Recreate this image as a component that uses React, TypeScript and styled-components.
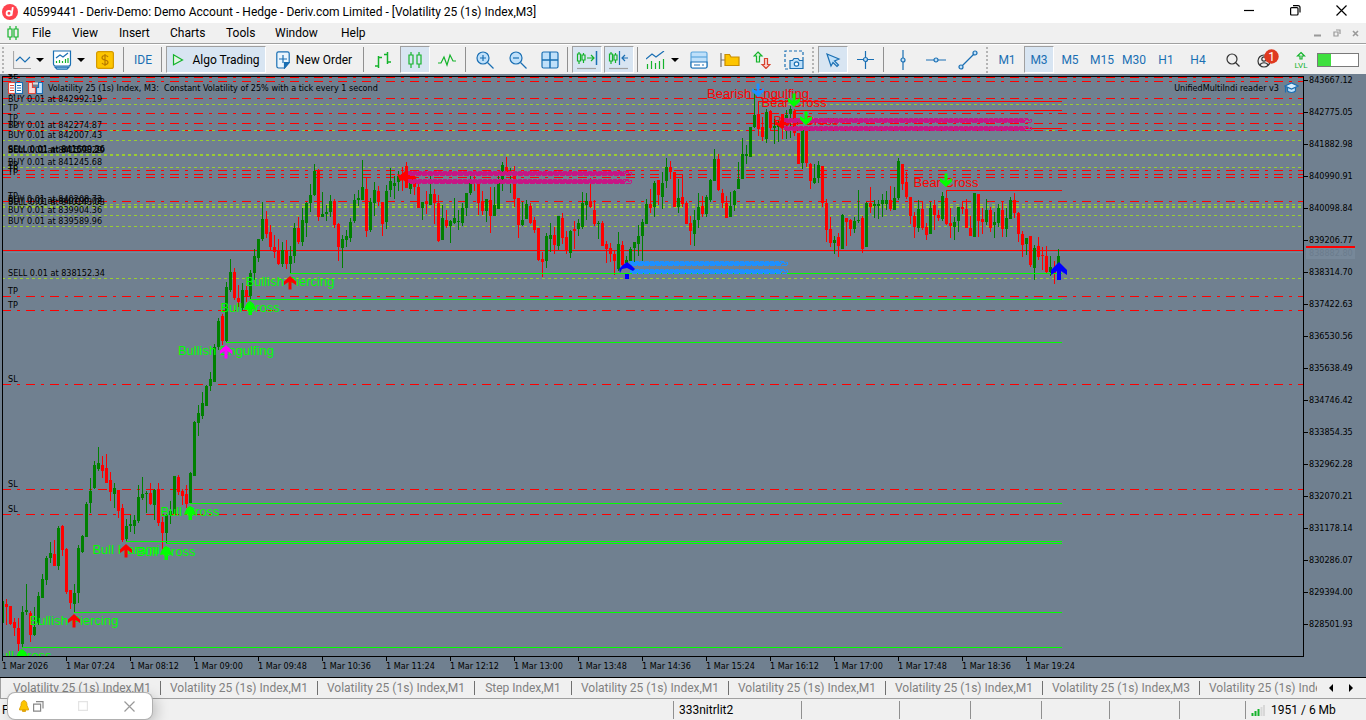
import React from "react";
import styled, { createGlobalStyle, css } from "styled-components";

/* ------------------------------------------------------------------ */
/* Theme values                                                        */
/* ------------------------------------------------------------------ */

const uiFont = `Roboto, "Open Sans", sans-serif`;
const chartFont = `"DejaVu Sans Condensed", "DejaVu Sans", sans-serif`;
const slate = "#708090";
const chrome = "#f0f0f0";
const blue = "#1a6fb3";
const sky = "#bfe0fa";
const green = "#14b32b";

const GlobalStyle = createGlobalStyle`
  * { box-sizing: border-box; }
  html, body { margin: 0; padding: 0; height: 100%; }
  body { overflow: hidden; background: ${chrome}; }
  button, input { font: inherit; }
`;

/* ------------------------------------------------------------------ */
/* Layout                                                              */
/* ------------------------------------------------------------------ */

const Page = styled.div`
  position: relative;
  display: flex;
  flex-direction: column;
  height: 100vh;
  overflow: hidden;
  font-family: ${uiFont};
  font-size: 12px;
  color: #000;
  background: ${chrome};
`;

const TitleBar = styled.header`
  display: flex;
  align-items: center;
  gap: 5px;
  height: 23px;
  flex: none;
  padding-left: 2px;
  background: #fff;
`;

const Title = styled.h1`
  flex: 1;
  margin: 0;
  font-size: 12px;
  font-weight: 400;
  line-height: 20px;
  white-space: nowrap;
`;

const bareButton = css`
  appearance: none;
  border: 0;
  padding: 0;
  margin: 0;
  background: transparent;
  color: inherit;
  display: flex;
  align-items: center;
  justify-content: center;
  flex: none;
  white-space: nowrap;
`;

const WindowButton = styled.button`
  ${bareButton}
  width: 46px;
  height: 20px;
  align-self: flex-start;
`;

const WindowButtons = styled.div`
  display: flex;
  height: 23px;
  margin-right: 2px;
`;

const MenuBar = styled.nav`
  display: flex;
  align-items: center;
  height: 21px;
  flex: none;
  padding-left: 7px;
  border-bottom: 1px solid #a0a0a0;
`;

const MenuItem = styled.button<{ $w: number }>`
  ${bareButton}
  justify-content: flex-start;
  width: ${(p) => p.$w}px;
  height: 20px;
`;

const ChildButtons = styled.div`
  display: flex;
  margin-left: auto;
  margin-right: 1px;
`;

const ChildButton = styled.button`
  ${bareButton}
  width: 19px;
  height: 20px;
`;

const Toolbar = styled.div`
  display: flex;
  align-items: center;
  height: 30px;
  flex: none;
  border-top: 1px solid #fff;
`;

const Grip = styled.span`
  flex: none;
  width: 2px;
  height: 26px;
  margin: 0 4px 0 2px;
  background: repeating-linear-gradient(#b4b4b4 0 2px, transparent 2px 4px);
`;

const Separator = styled.span<{ $before?: number }>`
  flex: none;
  width: 1px;
  height: 25px;
  margin: 0 2px 0 ${(p) => 1 + (p.$before ?? 0)}px;
  background: #909090;
`;

const Tool = styled.button<{ $w?: number; $on?: boolean; $before?: number; $ink?: string; $gap?: number }>`
  ${bareButton}
  width: ${(p) => p.$w ?? 32}px;
  height: 27px;
  gap: ${(p) => p.$gap ?? 5}px;
  margin-left: ${(p) => p.$before ?? 0}px;
  color: ${(p) => p.$ink ?? "#000"};
  ${(p) =>
    p.$on &&
    css`
      background: #d8e5f2;
      border: 1px solid;
      border-color: #a0a0a0 #fff #fff #a0a0a0;
    `}
`;

const Caret = styled.span`
  border: 4px solid transparent;
  border-top-color: #000;
  border-bottom: 0;
`;

const Meter = styled.div`
  flex: none;
  width: 42px;
  height: 14px;
  border: 1px solid #7a7a7a;
  background: linear-gradient(90deg, #3fe03f 0 13px, #fff 13px);
`;

const ChartArea = styled.main`
  flex: 1;
  min-height: 0;
  display: grid;
  grid-template-columns: minmax(0, 1fr) 62px;
  grid-template-rows: minmax(0, 1fr) 20px;
  padding: 2px 0 0 2px;
  background: ${slate};
  border-bottom: 1px solid #000;
  font-family: ${chartFont};
  font-size: 9px;
`;

const Plot = styled.section`
  position: relative;
  border: 1px solid #000;
  min-height: 0;
`;

const PlotSvg = styled.svg`
  display: block;
  width: 100%;
  height: 100%;
  overflow: visible;
  clip-path: inset(-3px 0 0 0);
`;

const PlotHead = styled.div`
  position: absolute;
  top: 3px;
  left: 5px;
  right: 4px;
  height: 16px;
  display: flex;
  align-items: center;
  gap: 5px;
  white-space: pre;
`;

const Expert = styled.span`
  margin-left: auto;
`;

const PriceAxis = styled.aside`
  overflow: hidden;
  position: relative;
`;

const PriceList = styled.ol`
  list-style: none;
  margin: -12px 0 0;
  padding: 0;
`;

const PriceItem = styled.li`
  display: flex;
  align-items: center;
  gap: 1px;
  height: 32px;
  &::before {
    content: "";
    width: 4px;
    height: 1px;
    background: #000;
  }
`;

const BidTag = styled.div`
  position: absolute;
  top: 170px;
  left: 2px;
  width: 49px;
  height: 13px;
  padding-left: 3px;
  border-top: 2px solid #f00;
  background: #778899;
  color: #6b7c8d;
  line-height: 11px;
`;

const TimeAxis = styled.ol`
  display: flex;
  list-style: none;
  margin: 0;
  padding: 0;
  overflow: hidden;
  grid-column: 1 / -1;
`;

const TimeItem = styled.li`
  position: relative;
  flex: 0 0 64px;
  line-height: 18px;
  white-space: nowrap;
  &::before {
    content: "";
    position: absolute;
    left: 0;
    top: 0;
    width: 1px;
    height: 4px;
    background: #000;
  }
`;

const TabBar = styled.nav`
  display: flex;
  height: 21px;
  flex: none;
  border-bottom: 1px solid #a0a0a0;
  border-left: 1px solid #a0a0a0;
  color: #808080;
`;

const TabStrip = styled.div`
  display: flex;
  align-items: center;
  flex: 1;
  min-width: 0;
  overflow: hidden;
  padding-left: 3px;
`;

const Tab = styled.button<{ $w: number }>`
  ${bareButton}
  width: ${(p) => p.$w}px;
  height: 14px;
  border-right: 1px solid #707070;
`;

const TabArrow = styled.button`
  ${bareButton}
  width: 20px;
  height: 19px;
`;

const TabArrows = styled.div`
  display: flex;
  flex: none;
  padding: 0 5px 0 4px;
`;

const StatusBar = styled.footer`
  display: flex;
  align-items: center;
  height: 21px;
  flex: none;
`;

const StatusCell = styled.div<{ $w?: number }>`
  display: flex;
  align-items: center;
  gap: 6px;
  height: 18px;
  ${(p) => (p.$w ? `flex: 0 0 ${p.$w}px;` : "flex: 1; min-width: 0;")}
  padding-left: 5px;
  border-left: 1px solid #909090;
  white-space: nowrap;
  &:first-child {
    border-left: 0;
    padding-left: 2px;
  }
`;

const Popup = styled.div`
  position: absolute;
  left: 8px;
  bottom: 1px;
  width: 144px;
  height: 26px;
  display: flex;
  align-items: center;
  border-radius: 7px;
  background: #fff;
  box-shadow: 0 0 0 1px #b0b0b0, 4px 4px 14px rgba(0, 0, 0, 0.22);
`;

const PopupButton = styled.button<{ $before: number }>`
  ${bareButton}
  margin-left: ${(p) => p.$before}px;
  width: 12px;
  height: 14px;
`;

/* ------------------------------------------------------------------ */
/* Toolbar icons                                                       */
/* ------------------------------------------------------------------ */

type IconProps = { w?: number; h?: number; children: React.ReactNode };
const Icon = ({ w = 20, h = 20, children }: IconProps) => (
  <svg width={w} height={h} viewBox={`0 0 ${w} ${h}`} fill="none" strokeWidth="1.2" aria-hidden="true">
    {children}
  </svg>
);

const Logo = () => (
  <Icon w={16} h={16}>
    <circle cx="8" cy="8" r="8" fill="#ff444f" />
    <circle cx="7" cy="9.3" r="2.4" stroke="#fff" strokeWidth="1.8" />
    <path d="M10.8 3.2 9.4 11.6" stroke="#fff" strokeWidth="1.8" />
  </Icon>
);

const CandlePair = ({ w = 12, h = 14 }) => (
  <Icon w={w} h={h}>
    <path d="M3 0v3M3 11v3M9 0v3M9 11v3M1 3h4v8H1zM7 3h4v8H7z" stroke={green} />
  </Icon>
);

const CandlesIcon = () => (
  <Icon w={14} h={18}>
    <path d="M3 1v3M3 13v4M11 1v3M11 13v4M1 4h4v9H1zM9 4h4v9H9z" stroke={green} />
  </Icon>
);

const LineChartIcon = () => (
  <Icon w={18} h={18}>
    <path d="M.5 0v17.5H18" stroke="#a8a8a8" />
    <path d="M3 10l4-4 5 5 5-5" stroke={blue} />
  </Icon>
);

const IndicatorWindowIcon = () => (
  <Icon w={20} h={20}>
    <path d="M1.5 1h17v13c0 1-1 2-2 2h-13c-1 0-2-1-2-2z" fill="#fff" stroke={blue} />
    <path d="M3 17.2h14l-2 2H5z" fill={sky} stroke={blue} />
    <path d="M4 8l4-3 3 2 5-4" stroke={blue} />
    <path d="M4.5 11v2M7.5 10v3M10.5 11v2M13.5 9v4M16 8v5" stroke={green} />
  </Icon>
);

const DollarIcon = () => (
  <Icon w={18} h={18}>
    <rect x=".6" y=".6" width="16.8" height="16.8" rx="2" fill="#fdc500" stroke="#d49a00" />
    <path d="M12 6c-.5-1-1.5-1.5-3-1.5S6 5.2 6 6.7 7.5 8.7 9 9s3 .8 3 2.3-1.5 2.2-3 2.2-2.5-.5-3-1.5M9 3v12" stroke="#b87a00" />
  </Icon>
);

const PlayIcon = () => (
  <Icon w={12} h={14}>
    <path d="M1.5 1.8v10L10.5 7z" fill="#e3f6e3" stroke={green} />
  </Icon>
);

const NewOrderIcon = () => (
  <Icon w={14} h={18}>
    <path d="M2.5.8h9c1 0 1.7.7 1.7 1.7v9L8.5 17h-6C1.5 17 .8 16.3.8 15.3V2.5C.8 1.5 1.5.8 2.5.8z" fill="#eaf5fd" stroke={blue} />
    <path d="M13 11.5H8.5V17z" fill={blue} stroke={blue} />
    <path d="M7 4v8M3 8h8" stroke={blue} />
  </Icon>
);

const BarsIcon = () => (
  <Icon w={18} h={18}>
    <path d="M4.5 5v12M1 15h3.5M4.5 6.5H8M13.5 1v12M10 3.5h3.5M13.5 11H17" stroke={green} strokeWidth="1.5" />
  </Icon>
);

const ZigzagIcon = () => (
  <Icon w={18} h={14}>
    <path d="M0 10h3l3-6 3 8 3-10 3 6h3" stroke={green} />
  </Icon>
);

const Magnifier = ({ plus }: { plus?: boolean }) => (
  <Icon w={18} h={18}>
    <circle cx="7" cy="7" r="6" fill={sky} stroke={blue} />
    <path d={plus ? "M4 7h6M7 4v6" : "M4 7h6"} stroke={blue} />
    <path d="M11.5 11.5l6 6" stroke={blue} />
  </Icon>
);

const GridIcon = () => (
  <Icon w={18} h={18}>
    <rect x="1" y="1" width="16" height="16" rx="1.5" fill={sky} stroke={blue} />
    <path d="M9 1v16M1 9h16" stroke={blue} strokeWidth="1.5" />
  </Icon>
);

const ScrollIcon = () => (
  <Icon w={22} h={20}>
    <path d="M3 2v2M3 11v3M7.5 3v2M7.5 10v3M1.5 4h3v7h-3zM6 5h3v5H6z" stroke={green} />
    <path d="M11 8h7M15 5l3 3-3 3" stroke={green} />
    <path d="M20.5 1v14" stroke={blue} strokeWidth="1.5" />
    <path d="M1 18.5h19" stroke="#a0a0a0" />
  </Icon>
);

const ShiftIcon = () => (
  <Icon w={22} h={20}>
    <path d="M3 2v2M3 11v3M7.5 3v2M7.5 10v3M1.5 4h3v7h-3zM6 5h3v5H6z" stroke={green} />
    <path d="M11.5 1v14M14 8h6M17 5l-3 3 3 3" stroke={blue} />
    <path d="M1 18.5h19" stroke="#a0a0a0" />
  </Icon>
);

const IndicatorsIcon = () => (
  <Icon w={20} h={18}>
    <path d="M0 8l6-5 4 3 8-6" stroke={blue} />
    <path d="M1.5 13v5M5.5 10v8M9.5 12v6M13.5 10v8M17.5 8v10" stroke={green} />
  </Icon>
);

const TemplateIcon = () => (
  <Icon w={18} h={18}>
    <rect x="1" y="1" width="16" height="16" rx="1.5" fill={sky} stroke="#5ba5dc" />
    <path d="M1 6h16" stroke="#5ba5dc" />
    <path d="M1 11h16v4.5c0 .8-.7 1.5-1.5 1.5h-13C1.7 17 1 16.3 1 15.5z" fill="#fff" stroke={blue} />
    <path d="M4 14h6M12 14h2" stroke={blue} />
  </Icon>
);

const FolderIcon = () => (
  <Icon w={20} h={16}>
    <path d="M1 1v14M1 8h4" stroke="#707070" />
    <path d="M5 3.5V13.5h14V5h-8L9.5 2.5H5z" fill="#fdc500" stroke="#c98e00" />
  </Icon>
);

const TradeArrowsIcon = () => (
  <Icon w={18} h={18}>
    <path d="M5 1l4 4H6.5v6h-3V5H1z" fill="#dff5df" stroke={green} />
    <path d="M13 17.5l-4-4h2.5v-6h3v6H17z" fill="#f8d4d0" stroke="#d8432f" />
  </Icon>
);

const CameraIcon = () => (
  <Icon w={20} h={20}>
    <path d="M1 12V1h18v11M1 14v5h4" stroke={blue} strokeDasharray="3 2" />
    <path d="M6 10.5h2.5l1.5-2h4l1.5 2H19V18.5H6z" fill={sky} stroke={blue} />
    <circle cx="12.5" cy="14" r="2.2" fill="#fff" stroke={blue} />
  </Icon>
);

const CursorIcon = () => (
  <Icon w={16} h={16}>
    <path d="M2 2l12 5-4.5 2 4 4-1.5 1.5-4-4L6 14z" fill={sky} stroke={blue} />
  </Icon>
);

const CrosshairIcon = () => (
  <Icon w={17} h={18}>
    <path d="M8.5 0v6M8.5 11v7M0 8.5h6M11 8.5h6" stroke={blue} />
    <circle cx="8.5" cy="8.5" r="2" fill={sky} stroke={blue} />
  </Icon>
);

const VLineIcon = () => (
  <Icon w={6} h={20}>
    <path d="M3 0v8M3 12v8" stroke={blue} />
    <circle cx="3" cy="10" r="2" fill={sky} stroke={blue} />
  </Icon>
);

const HLineIcon = () => (
  <Icon w={20} h={6}>
    <path d="M0 3h8M12 3h8" stroke={blue} />
    <circle cx="10" cy="3" r="2" fill={sky} stroke={blue} />
  </Icon>
);

const TrendIcon = () => (
  <Icon w={20} h={20}>
    <path d="M4 16L16 4" stroke={blue} />
    <circle cx="3" cy="17" r="2" fill={sky} stroke={blue} />
    <circle cx="17" cy="3" r="2" fill={sky} stroke={blue} />
  </Icon>
);

const SearchIcon = () => (
  <Icon w={14} h={14}>
    <circle cx="6" cy="6" r="5" stroke="#333" />
    <path d="M9.5 9.5l4 4" stroke="#333" />
  </Icon>
);

const AccountIcon = () => (
  <Icon w={22} h={22}>
    <circle cx="7" cy="12" r="6" stroke="#333" />
    <circle cx="7" cy="10" r="2.2" stroke="#333" />
    <path d="M3 16c1-3 7-3 8 0" stroke="#333" />
    <circle cx="14.5" cy="7.5" r="7.2" fill="#df3a20" />
    <text x="14.5" y="12" textAnchor="middle" fontSize="12" fill="#fff">1</text>
  </Icon>
);

const LevelIcon = () => (
  <Icon w={16} h={18}>
    <path d="M8 1.5l3.5 3.5H9v3H7V5H4.5z" stroke={green} />
    <text x="8" y="17" textAnchor="middle" fontSize="8" fill={green}>LVL</text>
  </Icon>
);

/* ------------------------------------------------------------------ */
/* Chart data                                                          */
/* ------------------------------------------------------------------ */

type Candle = [up: 0 | 1, high: number, top: number, bottom: number, low: number];

const candles: Candle[] = [
  [1, 601, 601, 623, 623], [0, 599, 604, 607, 625], [0, 606, 606, 624, 625], [0, 618, 622, 628, 636],
  [0, 618, 628, 644, 651], [1, 606, 612, 644, 647], [1, 584, 610, 612, 615], [0, 611, 613, 635, 642],
  [1, 607, 627, 635, 636], [1, 592, 596, 623, 625], [1, 574, 579, 598, 598], [1, 556, 558, 580, 585],
  [1, 542, 553, 558, 563], [0, 540, 554, 566, 566], [1, 526, 528, 566, 570], [0, 525, 526, 550, 556],
  [0, 548, 549, 592, 594], [0, 590, 590, 603, 609], [1, 584, 593, 604, 612], [1, 545, 548, 593, 603],
  [1, 535, 536, 552, 553], [1, 502, 504, 537, 537], [1, 478, 491, 503, 513], [1, 461, 465, 488, 489],
  [1, 447, 463, 469, 471], [0, 456, 465, 471, 478], [0, 454, 468, 483, 483], [0, 472, 480, 492, 501],
  [1, 483, 488, 494, 508], [0, 490, 490, 511, 518], [0, 504, 508, 540, 542], [1, 519, 526, 539, 541],
  [1, 515, 524, 526, 532], [1, 515, 520, 526, 534], [1, 485, 497, 521, 523], [1, 477, 494, 498, 500],
  [1, 491, 493, 494, 513], [0, 483, 493, 504, 505], [1, 489, 490, 505, 520], [0, 483, 489, 523, 526],
  [0, 517, 522, 533, 550], [1, 514, 515, 533, 543], [1, 501, 511, 515, 524], [1, 476, 476, 514, 514],
  [0, 475, 477, 492, 495], [0, 489, 491, 496, 505], [0, 485, 494, 504, 508], [1, 472, 473, 503, 503],
  [1, 421, 422, 476, 476], [1, 405, 413, 423, 436], [1, 392, 403, 416, 419], [1, 385, 386, 406, 406],
  [1, 372, 379, 386, 391], [1, 344, 347, 382, 382], [1, 318, 321, 347, 350], [0, 314, 316, 341, 345],
  [1, 282, 287, 341, 342], [1, 259, 272, 290, 292], [0, 268, 272, 298, 300], [0, 285, 298, 302, 307],
  [1, 283, 290, 308, 310], [0, 285, 290, 297, 302], [1, 270, 273, 296, 299], [1, 249, 256, 273, 280],
  [1, 239, 239, 258, 262], [1, 202, 219, 239, 241], [0, 211, 219, 234, 238], [0, 225, 232, 247, 251],
  [0, 235, 247, 252, 258], [0, 239, 250, 264, 265], [1, 242, 250, 264, 267], [0, 240, 250, 264, 269],
  [1, 246, 256, 264, 273], [1, 223, 228, 256, 263], [0, 217, 228, 242, 244], [1, 208, 220, 242, 246],
  [1, 202, 203, 223, 237], [1, 184, 195, 203, 212], [1, 164, 171, 195, 196], [0, 169, 170, 217, 221],
  [1, 192, 214, 217, 217], [1, 205, 212, 214, 221], [1, 195, 201, 212, 217], [0, 199, 201, 225, 228],
  [0, 223, 224, 247, 261], [1, 235, 239, 248, 268], [1, 230, 236, 240, 247], [1, 218, 222, 238, 242],
  [1, 194, 200, 221, 223], [1, 190, 198, 200, 206], [1, 160, 187, 200, 200], [0, 178, 189, 231, 237],
  [1, 198, 202, 230, 232], [1, 182, 190, 203, 216], [0, 186, 191, 202, 206], [0, 202, 202, 224, 236],
  [1, 185, 191, 222, 229], [1, 168, 181, 190, 197], [1, 176, 183, 186, 199], [1, 171, 176, 182, 191],
  [0, 167, 175, 180, 191], [0, 162, 166, 188, 188], [1, 175, 177, 189, 194], [0, 173, 177, 187, 195],
  [0, 184, 187, 208, 208], [1, 202, 202, 208, 220], [0, 191, 201, 204, 214], [1, 175, 194, 205, 205],
  [0, 189, 194, 203, 224], [0, 195, 203, 241, 242], [1, 205, 218, 240, 240], [0, 210, 220, 226, 228],
  [1, 220, 221, 226, 243], [1, 198, 218, 223, 224], [1, 210, 221, 222, 230], [1, 203, 208, 223, 226],
  [1, 193, 193, 208, 216], [1, 171, 180, 193, 195], [0, 176, 179, 183, 191], [0, 183, 183, 203, 215],
  [0, 191, 201, 211, 215], [1, 199, 199, 211, 222], [0, 187, 200, 216, 233], [1, 187, 205, 216, 216],
  [1, 176, 182, 209, 209], [1, 162, 165, 184, 191], [0, 157, 167, 175, 175], [1, 168, 172, 175, 193],
  [0, 166, 175, 199, 207], [0, 198, 198, 225, 238], [1, 202, 220, 225, 226], [1, 200, 204, 219, 219],
  [0, 203, 206, 223, 224], [0, 217, 220, 230, 233], [0, 228, 228, 260, 261], [0, 252, 259, 262, 277],
  [1, 233, 236, 261, 268], [1, 223, 235, 239, 252], [0, 227, 235, 245, 254], [1, 216, 216, 246, 250],
  [0, 213, 218, 238, 244], [0, 231, 237, 250, 254], [1, 230, 231, 253, 258], [0, 221, 229, 231, 249],
  [1, 219, 223, 229, 236], [1, 192, 203, 227, 229], [1, 193, 201, 205, 220], [0, 178, 201, 207, 208],
  [0, 200, 210, 224, 226], [1, 221, 223, 224, 239], [0, 221, 223, 246, 246], [0, 241, 244, 249, 263],
  [0, 243, 248, 254, 262], [0, 251, 254, 261, 275], [1, 232, 244, 269, 271], [0, 241, 245, 265, 269],
  [1, 256, 260, 263, 265], [1, 247, 249, 261, 262], [1, 242, 242, 248, 262], [1, 225, 236, 244, 256],
  [1, 219, 222, 236, 262], [1, 199, 204, 224, 224], [0, 189, 204, 208, 213], [1, 181, 183, 207, 217],
  [0, 180, 180, 195, 205], [1, 172, 183, 197, 209], [1, 158, 167, 181, 188], [0, 161, 167, 172, 179],
  [0, 172, 172, 207, 207], [1, 179, 198, 207, 213], [0, 174, 197, 204, 207], [0, 201, 203, 224, 224],
  [0, 216, 223, 231, 245], [1, 210, 220, 234, 246], [1, 193, 207, 220, 228], [0, 196, 206, 214, 217],
  [1, 195, 197, 214, 217], [1, 179, 180, 200, 202], [1, 149, 159, 181, 181], [0, 154, 159, 190, 191],
  [0, 189, 193, 203, 208], [0, 196, 203, 218, 218], [1, 192, 206, 217, 217], [1, 190, 191, 205, 211],
  [1, 162, 179, 189, 189], [1, 138, 154, 179, 179], [1, 145, 154, 156, 164], [1, 127, 127, 157, 157],
  [1, 89, 115, 127, 128], [0, 102, 114, 129, 136], [0, 117, 127, 137, 141], [1, 109, 112, 139, 143],
  [0, 110, 111, 128, 130], [1, 119, 126, 128, 144], [1, 120, 124, 127, 142], [0, 114, 114, 128, 139],
  [1, 110, 115, 124, 139], [1, 106, 109, 114, 138], [0, 109, 111, 133, 136], [0, 133, 133, 164, 164],
  [1, 130, 130, 163, 169], [0, 129, 129, 163, 167], [0, 163, 164, 181, 189], [1, 164, 178, 183, 184],
  [1, 161, 165, 178, 183], [0, 166, 166, 203, 207], [0, 199, 203, 230, 242], [0, 217, 229, 243, 247],
  [1, 236, 240, 243, 254], [0, 233, 237, 246, 257], [1, 214, 215, 249, 249], [0, 218, 218, 222, 246],
  [0, 219, 220, 229, 236], [1, 217, 221, 229, 233], [1, 190, 220, 221, 223], [0, 216, 218, 249, 253],
  [1, 202, 203, 247, 247], [0, 187, 203, 207, 213], [1, 200, 204, 206, 218], [1, 200, 204, 206, 219],
  [1, 194, 200, 204, 217], [1, 191, 200, 204, 210], [0, 186, 200, 209, 211], [1, 187, 198, 210, 210],
  [1, 158, 161, 198, 200], [0, 164, 164, 184, 190], [0, 172, 182, 197, 199], [0, 197, 197, 216, 224],
  [0, 212, 216, 227, 238], [1, 200, 209, 228, 232], [0, 201, 209, 228, 230], [0, 223, 227, 235, 240],
  [1, 202, 208, 234, 234], [0, 200, 205, 215, 230], [0, 210, 215, 218, 221], [1, 192, 196, 219, 221],
  [0, 190, 198, 224, 225], [0, 208, 223, 226, 238], [1, 217, 222, 227, 240], [1, 207, 207, 221, 232],
  [0, 201, 207, 209, 214], [0, 199, 209, 228, 228], [0, 216, 228, 236, 236], [1, 193, 193, 237, 237],
  [0, 194, 194, 221, 237], [0, 208, 219, 222, 234], [1, 199, 210, 222, 225], [0, 207, 210, 228, 232],
  [1, 212, 222, 225, 238], [1, 204, 208, 223, 227], [0, 202, 210, 229, 237], [1, 208, 218, 229, 237],
  [1, 197, 200, 219, 219], [0, 193, 200, 213, 218], [0, 212, 213, 234, 242], [0, 231, 234, 245, 257],
  [1, 238, 238, 244, 255], [0, 236, 236, 265, 267], [1, 245, 248, 268, 280], [0, 237, 246, 257, 260],
  [0, 247, 255, 256, 270], [0, 246, 256, 272, 273], [1, 256, 267, 272, 276], [0, 261, 268, 274, 284],
  [1, 249, 256, 269, 274],
];

const stopLevels = [77, 81, 98, 113, 123, 130, 170, 174, 177, 201, 296, 310, 384, 489, 514];
const openLevels = [104, 130, 140, 154, 155, 167, 204, 206, 207, 215, 226, 278];

const orderLabels: [y: number, text: string][] = [
  [77, "SL"], [81, "SL"], [98, "TP"], [104, "BUY 0.01 at 842992.19"], [113, "TP"], [123, "TP"], [130, "TP"],
  [130, "BUY 0.01 at 842274.87"], [140, "BUY 0.01 at 842007.43"], [154, "SELL 0.01 at 841609.36"],
  [155, "BUY 0.01 at 841579.29"], [155, "SELL 0.01 at 841593.29"], [167, "BUY 0.01 at 841245.68"],
  [170, "TP"], [174, "TP"], [177, "TP"], [201, "TP"], [204, "BUY 0.01 at 840208.73"],
  [206, "BUY 0.01 at 840190.08"], [207, "SELL 0.01 at 840143.03"], [215, "BUY 0.01 at 839904.36"],
  [226, "BUY 0.01 at 839589.96"], [278, "SELL 0.01 at 838152.34"], [296, "TP"], [310, "TP"],
  [384, "SL"], [489, "SL"], [514, "SL"],
];

type Signal = { x: number; y: number; text: string; tip: number; arrow: string; down?: boolean; line: number; bold?: boolean };
const signals: Signal[] = [
  { x: 22, y: 660, text: "Bull Cross", tip: 649, arrow: "#0f0", line: 647, bold: true },
  { x: 74, y: 625, text: "Bullish Piercing", tip: 614, arrow: "#f00", line: 612 },
  { x: 126, y: 554, text: "Bull Harami", tip: 544, arrow: "#f00", line: 541 },
  { x: 166, y: 556, text: "Bull Cross", tip: 546, arrow: "#0f0", line: 543, bold: true },
  { x: 190, y: 516, text: "Bull Cross", tip: 506, arrow: "#0f0", line: 503, bold: true },
  { x: 226, y: 355, text: "Bullish Engulfing", tip: 345, arrow: "#f0f", line: 342 },
  { x: 250, y: 312, text: "Bull Cross", tip: 301, arrow: "#0f0", line: 299, bold: true },
  { x: 290, y: 286, text: "Bullish Piercing", tip: 276, arrow: "#f00", line: 273 },
  { x: 758, y: 98, text: "Bearish Engulfing", tip: 97, arrow: "#1e90ff", down: true, line: 101 },
  { x: 794, y: 107, text: "Bear Cross", tip: 107, arrow: "#0f0", down: true, line: 110 },
  { x: 806, y: 125, text: "Bear Cross", tip: 125, arrow: "#0f0", down: true, line: 128 },
  { x: 946, y: 187, text: "Bear Cross", tip: 187, arrow: "#0f0", down: true, line: 190 },
];

const zones: [x1: number, x2: number, y: number, color: string][] = [
  [408, 632, 171, "#c71585"], [408, 632, 179, "#c71585"],
  [630, 788, 261, "#1e90ff"], [630, 788, 269, "#1e90ff"],
  [784, 1032, 118, "#c71585"], [784, 1032, 126, "#c71585"],
];

const prices = [
  "843667.12", "842775.05", "841882.98", "840990.91", "840098.84", "839206.77", "838314.70", "837422.63",
  "836530.56", "835638.49", "834746.42", "833854.35", "832962.28", "832070.21", "831178.14", "830286.07",
  "829394.00", "828501.93",
];

const times = [
  "1 Mar 2026", "1 Mar 07:24", "1 Mar 08:12", "1 Mar 09:00", "1 Mar 09:48", "1 Mar 10:36", "1 Mar 11:24",
  "1 Mar 12:12", "1 Mar 13:00", "1 Mar 13:48", "1 Mar 14:36", "1 Mar 15:24", "1 Mar 16:12", "1 Mar 17:00",
  "1 Mar 17:48", "1 Mar 18:36", "1 Mar 19:24",
];

/* ------------------------------------------------------------------ */
/* Chart                                                               */
/* ------------------------------------------------------------------ */

const Arrow = ({ x, tip, color, down, bold }: { x: number; tip: number; color: string; down?: boolean; bold?: boolean }) => (
  <path
    transform={`translate(${x} ${tip}) scale(1 ${down ? -1 : 1})`}
    fill={color}
    d={
      bold
        ? "M0 0C2.5 1 5 4.5 6 9L2 8V14H-1.5V8L-6 9C-5 4.5-2.5 1 0 0z"
        : "M0 0L6 5.5V9L1.5 6V13.5H-1.5V6L-6 9V5.5z"
    }
  />
);

const Chart = () => (
  <PlotSvg role="img" aria-label="Candlestick chart">
    <g transform="translate(-3 -77)" shapeRendering="crispEdges">
      {openLevels.map((y) => (
        <line key={y} x1="2" x2="200%" y1={y + 0.5} y2={y + 0.5} stroke="#9acd32" strokeDasharray="3 3" />
      ))}
      {stopLevels.map((y) => (
        <line key={y} x1="2" x2="200%" y1={y + 0.5} y2={y + 0.5} stroke="#f00" strokeDasharray="9 6 3 6" />
      ))}
      <line x1="2" x2="200%" y1="252.5" y2="252.5" stroke="#778899" />
      <line x1="2" x2="200%" y1="250.5" y2="250.5" stroke="#f00" />
      {candles.map(([up, high, top, bottom, low], i) => {
        const x = 2 + i * 4;
        return (
          <g key={x} fill={up ? "#008000" : "#f00"}>
            <rect x={x} y={high} width="1" height={low - high} />
            <rect x={x - 1} y={top} width="3" height={Math.max(1, bottom - top)} />
          </g>
        );
      })}
      {signals.map((s) => (
        <line key={s.x} x1={s.x} x2="1062" y1={s.line + 0.5} y2={s.line + 0.5} stroke={s.down ? "#f00" : "#0f0"} />
      ))}
    </g>
    <g transform="translate(-3 -77)">
      <g fontFamily='"Liberation Sans", sans-serif' fontSize="13" textAnchor="middle">
        {signals.map((s) => (
          <text key={s.x} x={s.x} y={s.y} fill={s.down ? "#f00" : "#0f0"}>{s.text}</text>
        ))}
      </g>
      <path d="M397 174l4 1 4-4 4 3 8 3-3 4-4-2-3 4-4-3-3 1z" fill="#f00" />
      <path d="M774 120l5 3 3-6 4 4 5 1-3 4-4-1-2 4-5-4z" fill="#f00" />
      {zones.map(([x1, x2, y, color]) => (
        <g key={`${x1}-${y}`} stroke={color} shapeRendering="crispEdges">
          <line x1={x1} x2={x2 - 8} y1={y + 2.5} y2={y + 2.5} strokeWidth="3" />
          <line x1={x1} x2={x2 - 3} y1={y + 0.5} y2={y + 0.5} strokeDasharray="4 1" />
          <line x1={x1 + 2} x2={x2} y1={y + 4.5} y2={y + 4.5} strokeDasharray="5 1" />
          <path d={`M${x2 - 8} ${y + 3.5}l3-3 2 2 2-1 1 2`} fill="none" />
        </g>
      ))}
      {signals.map((s) => (
        <Arrow key={s.x} x={s.x} tip={s.tip} color={s.arrow} down={s.down} bold={s.bold} />
      ))}
      <path d="M619 269l4-4 4-3 4 3 4 4-2 2-6-3-5 1-2 4zM625 274h4v5h-4z" fill="#00f" />
      <path d="M1059 262l8 8v5l-6-4v9h-4v-9l-6 4v-5z" fill="#00f" />
      <g fontFamily={chartFont} fontSize="9">
        {orderLabels.map(([y, text]) => (
          <text key={`${y}${text}`} x="8" y={y - 2}>{text}</text>
        ))}
      </g>
    </g>
  </PlotSvg>
);

const DepthIcon = () => (
  <Icon w={15} h={12}>
    <rect x=".5" y=".5" width="7" height="11" fill="#fff" stroke="#e0483a" />
    <rect x="7.5" y=".5" width="7" height="11" fill="#fff" stroke={blue} />
    <path d="M2 3.5h4M2 6h4M2 8.5h4" stroke="#e0483a" />
    <path d="M9 3.5h4M9 6h4M9 8.5h4" stroke={blue} />
  </Icon>
);

const OneClickIcon = () => (
  <Icon w={15} h={12}>
    <path d="M.5.5h4v5h3v6h-7z" fill="#fbd9d5" stroke="#e0483a" />
    <path d="M14.5.5h-4v5h-2v6h6z" fill={sky} stroke={blue} />
    <path d="M5 1.5h5" stroke="#ddd" strokeWidth="2" />
  </Icon>
);

const HatIcon = () => (
  <Icon w={15} h={12}>
    <path d="M3.5 5v4c2 2 6 2 8 0V5" fill={sky} stroke={blue} />
    <path d="M1 4l6.5-3L14 4 7.5 7z" fill="#d8eefc" stroke={blue} />
    <path d="M1.5 4.5v6" stroke={blue} />
  </Icon>
);

/* ------------------------------------------------------------------ */
/* App                                                                 */
/* ------------------------------------------------------------------ */

const menus: [string, number][] = [
  ["File", 40], ["View", 47], ["Insert", 51], ["Charts", 56], ["Tools", 49], ["Window", 66], ["Help", 40],
];

const tabs: [string, number][] = [
  ["Volatility 25 (1s) Index,M1", 157], ["Volatility 25 (1s) Index,M1", 157], ["Volatility 25 (1s) Index,M1", 157],
  ["Step Index,M1", 97], ["Volatility 25 (1s) Index,M1", 157], ["Volatility 25 (1s) Index,M1", 157],
  ["Volatility 25 (1s) Index,M1", 157], ["Volatility 25 (1s) Index,M3", 157], ["Volatility 25 (1s) Index,M1", 157],
];

export default function App() {
  return (
    <Page>
      <GlobalStyle />
      <TitleBar>
        <Logo />
        <Title>40599441 - Deriv-Demo: Demo Account - Hedge - Deriv.com Limited - [Volatility 25 (1s) Index,M3]</Title>
        <WindowButtons>
          <WindowButton aria-label="Minimize">
            <Icon w={10} h={10}><path d="M0 5.5h10" stroke="#000" /></Icon>
          </WindowButton>
          <WindowButton aria-label="Restore">
            <Icon w={11} h={11}><path d="M.6 3.6q0-1 1-1H7q1 0 1 1V9q0 1-1 1H1.6q-1 0-1-1zM3 .6h5q2 0 2 2v5" stroke="#000" /></Icon>
          </WindowButton>
          <WindowButton aria-label="Close">
            <Icon w={11} h={11}><path d="M.5.5l10 10M10.5.5l-10 10" stroke="#000" /></Icon>
          </WindowButton>
        </WindowButtons>
      </TitleBar>

      <MenuBar>
        <MenuItem $w={25} aria-label="Chart"><CandlePair /></MenuItem>
        {menus.map(([label, w]) => <MenuItem key={label} $w={w}>{label}</MenuItem>)}
        <ChildButtons>
          <ChildButton aria-label="Minimize chart"><Icon w={7} h={8}><path d="M0 6.5h7" stroke="#999" strokeWidth="2" /></Icon></ChildButton>
          <ChildButton aria-label="Restore chart"><Icon w={8} h={8}><path d="M1 3h4v4H1zM3 1h4v4" stroke="#999" /></Icon></ChildButton>
          <ChildButton aria-label="Close chart"><Icon w={7} h={8}><path d="M1 2l5 5M6 2L1 7" stroke="#999" strokeWidth="1.6" /></Icon></ChildButton>
        </ChildButtons>
      </MenuBar>

      <Toolbar role="toolbar">
        <Grip />
        <Tool $w={40} aria-label="Chart type"><LineChartIcon /><Caret /></Tool>
        <Tool $w={40} aria-label="Indicator window"><IndicatorWindowIcon /><Caret /></Tool>
        <Tool $w={34} aria-label="Market"><DollarIcon /></Tool>
        <Separator />
        <Tool $w={34} $ink={blue}>IDE</Tool>
        <Separator />
        <Tool $w={100} $on $before={2} $gap={8}><PlayIcon />Algo Trading</Tool>
        <Tool $w={96} $gap={6}><NewOrderIcon />New Order</Tool>
        <Separator />
        <Tool $w={34} aria-label="Bars"><BarsIcon /></Tool>
        <Tool $w={30} $on aria-label="Candles"><CandlesIcon /></Tool>
        <Tool $w={34} aria-label="Line"><ZigzagIcon /></Tool>
        <Separator />
        <Tool $w={34} aria-label="Zoom in"><Magnifier plus /></Tool>
        <Tool aria-label="Zoom out"><Magnifier /></Tool>
        <Tool aria-label="Tile windows"><GridIcon /></Tool>
        <Separator />
        <Tool $w={30} $on $before={2} aria-label="Auto scroll"><ScrollIcon /></Tool>
        <Tool $w={30} $on $before={2} aria-label="Chart shift"><ShiftIcon /></Tool>
        <Separator $before={2} />
        <Tool $w={44} aria-label="Indicators"><IndicatorsIcon /><Caret /></Tool>
        <Tool $w={30} aria-label="Templates"><TemplateIcon /></Tool>
        <Tool aria-label="Folder"><FolderIcon /></Tool>
        <Tool aria-label="Trade levels"><TradeArrowsIcon /></Tool>
        <Tool aria-label="Screenshot"><CameraIcon /></Tool>
        <Grip />
        <Tool $w={30} $on aria-label="Cursor"><CursorIcon /></Tool>
        <Tool $w={34} aria-label="Crosshair"><CrosshairIcon /></Tool>
        <Separator />
        <Tool $w={34} aria-label="Vertical line"><VLineIcon /></Tool>
        <Tool aria-label="Horizontal line"><HLineIcon /></Tool>
        <Tool aria-label="Trend line"><TrendIcon /></Tool>
        <Grip />
        <Tool $w={30} $ink={blue}>M1</Tool>
        <Tool $w={30} $ink={blue} $on $before={2}>M3</Tool>
        <Tool $ink={blue}>M5</Tool>
        <Tool $ink={blue}>M15</Tool>
        <Tool $ink={blue}>M30</Tool>
        <Tool $ink={blue}>H1</Tool>
        <Tool $ink={blue}>H4</Tool>
        <Tool $w={38} aria-label="Search"><SearchIcon /></Tool>
        <Tool aria-label="Account, 1 notification"><AccountIcon /></Tool>
        <Tool $w={33} aria-label="Level"><LevelIcon /></Tool>
        <Meter role="meter" aria-label="Connection" aria-valuenow={32} />
      </Toolbar>

      <ChartArea>
        <Plot>
          <Chart />
          <PlotHead>
            <DepthIcon />
            <OneClickIcon />
            <span>Volatility 25 (1s) Index, M3:  Constant Volatility of 25% with a tick every 1 second</span>
            <Expert>UnifiedMultiIndi reader v3</Expert>
            <HatIcon />
          </PlotHead>
        </Plot>
        <PriceAxis>
          <PriceList>
            {prices.map((p) => <PriceItem key={p}>{p}</PriceItem>)}
          </PriceList>
          <BidTag>838882.80</BidTag>
        </PriceAxis>
        <TimeAxis>
          {times.map((t) => <TimeItem key={t}>{t}</TimeItem>)}
        </TimeAxis>
      </ChartArea>

      <TabBar>
        <TabStrip>
          {tabs.map(([label, w], i) => <Tab key={i} $w={w}>{label}</Tab>)}
        </TabStrip>
        <TabArrows>
          <TabArrow aria-label="Previous tabs"><Icon w={4} h={8}><path d="M4 0v8L0 4z" fill="#000" /></Icon></TabArrow>
          <TabArrow aria-label="Next tabs"><Icon w={4} h={8}><path d="M0 0v8l4-4z" fill="#000" /></Icon></TabArrow>
        </TabArrows>
      </TabBar>

      <StatusBar>
        <StatusCell>For Help, press F1</StatusCell>
        <StatusCell $w={128}>333nitrlit2</StatusCell>
        <StatusCell $w={98} />
        <StatusCell $w={71} />
        <StatusCell $w={71} />
        <StatusCell $w={68} />
        <StatusCell $w={70} />
        <StatusCell $w={66} />
        <StatusCell $w={121}>
          <Icon w={14} h={12}>
            <path d="M1.5 9v3M4.5 7v5M7.5 5v7" stroke={green} strokeWidth="2" />
            <path d="M10.5 3v9M13 1v11" stroke="#d8d8d8" strokeWidth="2" />
          </Icon>
          1951 / 6 Mb
        </StatusCell>
      </StatusBar>

      <Popup>
        <PopupButton $before={10} aria-label="Notifications">
          <Icon w={10} h={12}>
            <path d="M5 .5C7.5 1 8 3 8 5.5L9.5 9v1H.5V9L2 5.5C2 3 2.5 1 5 .5zM3.5 10h3v1.5h-3z" fill="#fdc500" stroke="#d99a00" strokeWidth=".8" />
          </Icon>
        </PopupButton>
        <PopupButton $before={2} aria-label="Restore">
          <Icon w={11} h={11}><path d="M.6 3.2h7v7h-7zM3 .6h7v7" stroke="#888" /></Icon>
        </PopupButton>
        <PopupButton $before={33} aria-label="Maximize">
          <Icon w={10} h={10}><path d="M.6.6h8.8v8.8H.6z" stroke="#e4e4e4" /></Icon>
        </PopupButton>
        <PopupButton $before={34} aria-label="Close">
          <Icon w={11} h={11}><path d="M.5.5l10 10M10.5.5l-10 10" stroke="#999" /></Icon>
        </PopupButton>
      </Popup>
    </Page>
  );
}
